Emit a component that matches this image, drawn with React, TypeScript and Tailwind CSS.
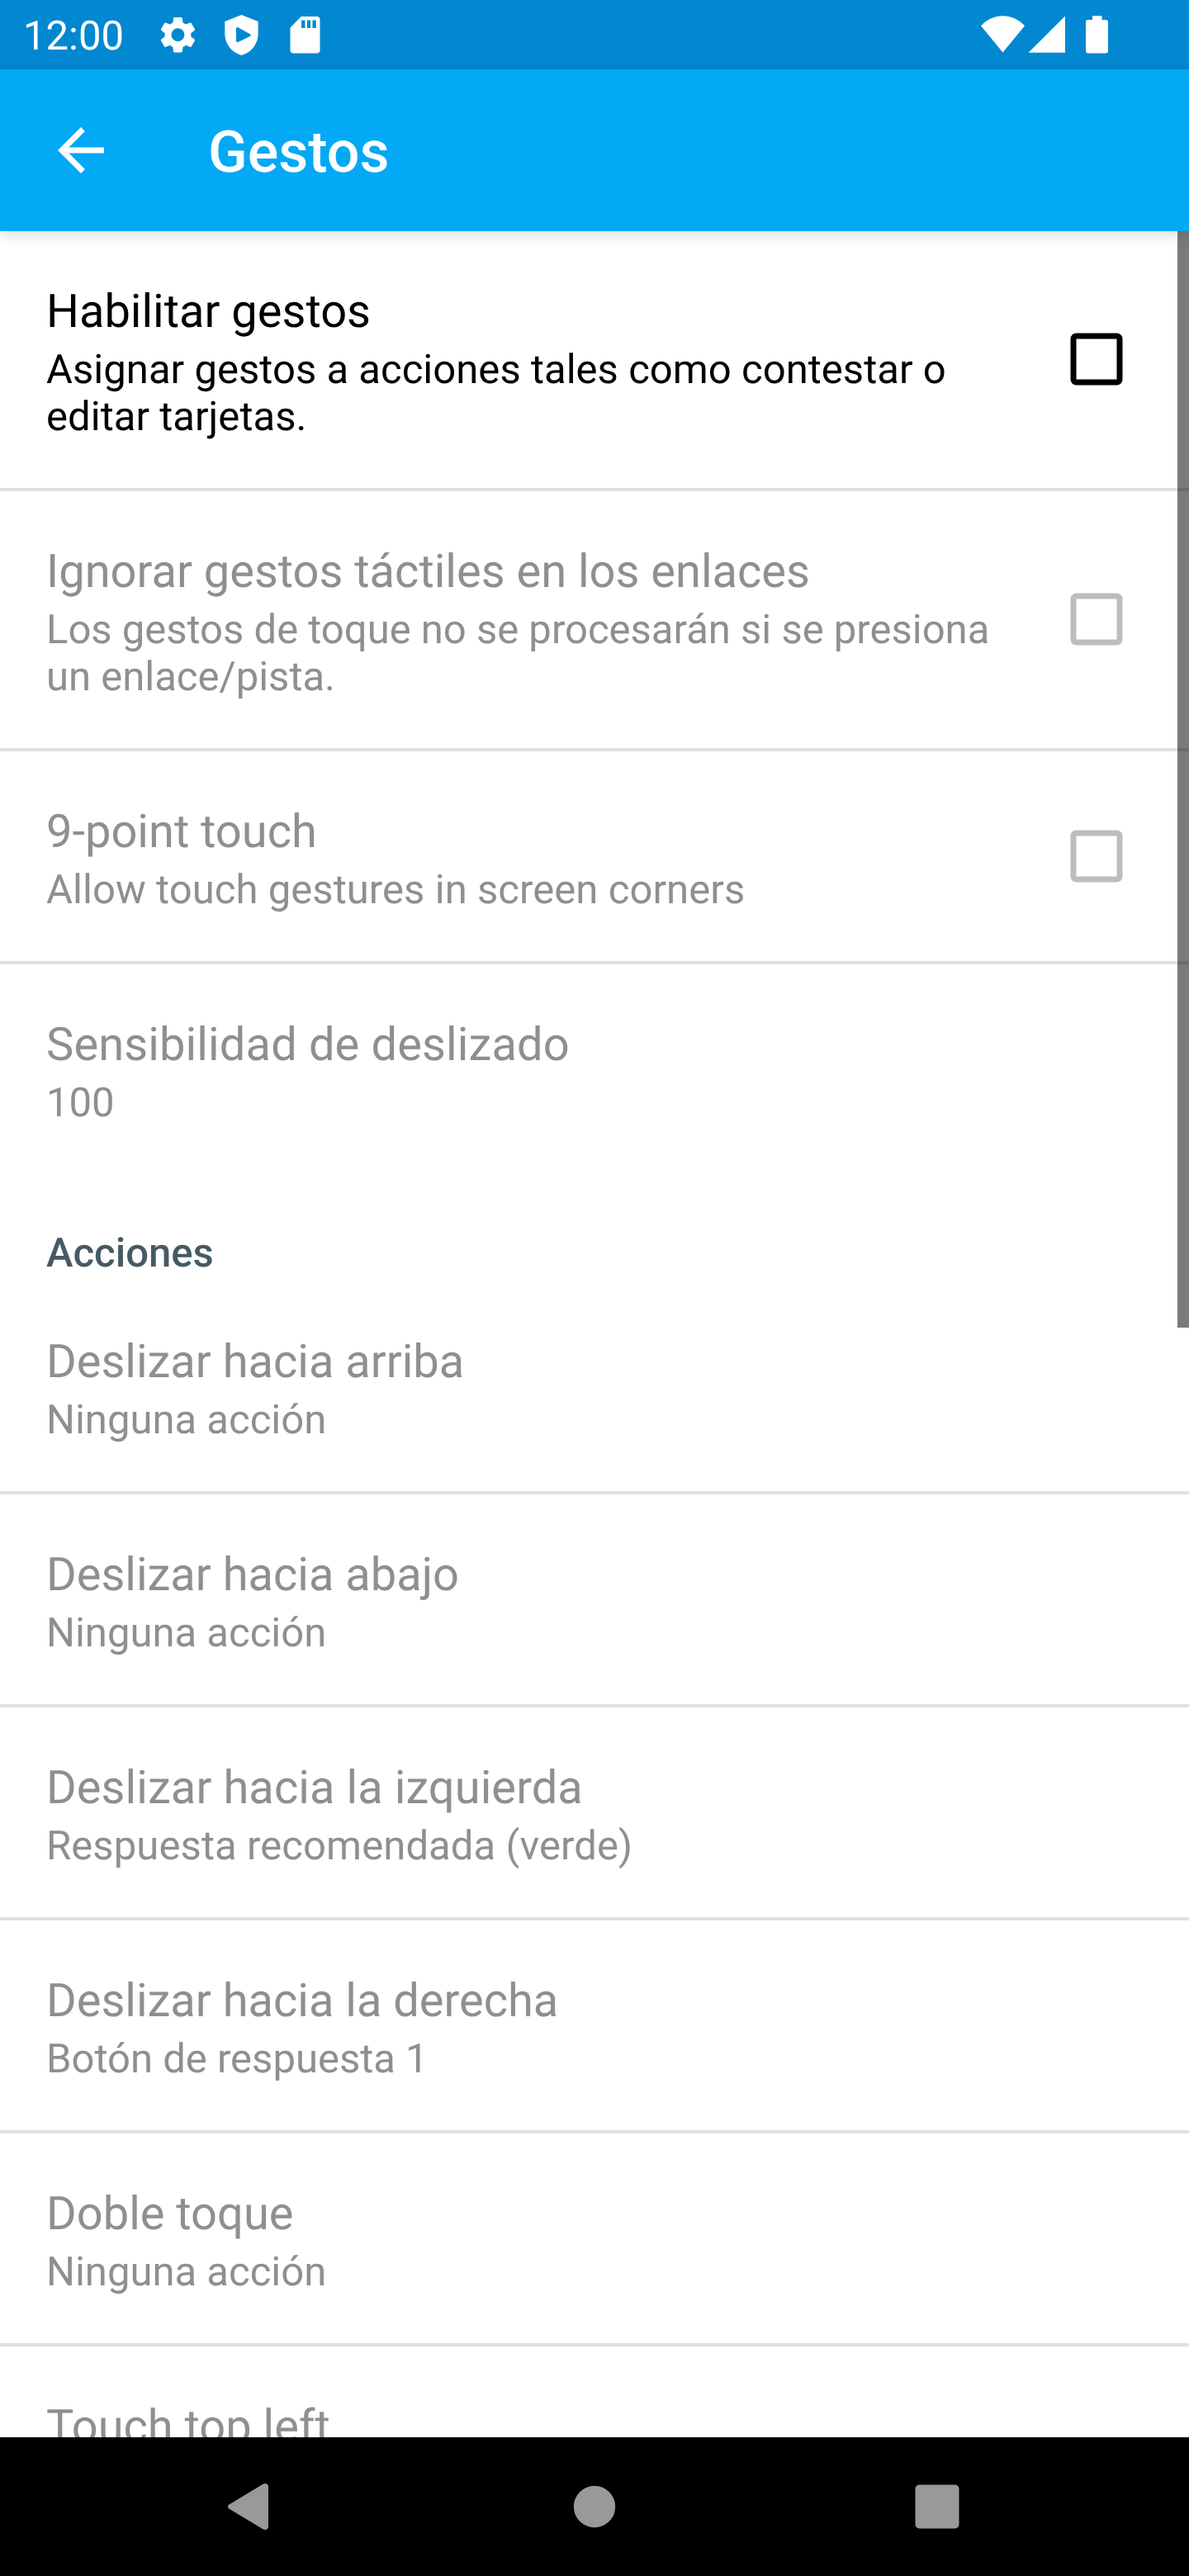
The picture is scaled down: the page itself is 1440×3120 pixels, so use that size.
function Checkbox({ enabled, raised }: { enabled: boolean; raised: boolean }) {
  return (
    <svg
      className={`mr-20 h-16 w-16 shrink-0 ${raised ? "-mt-px" : ""} ${enabled ? "text-black" : "text-[#bdbdbd]"}`}
      viewBox="0 0 64 64"
      fill="none"
      role="checkbox"
      aria-checked="false"
    >
      <rect x="4" y="4" width="56" height="56" rx="3.5" stroke="currentColor" strokeWidth="7" />
    </svg>
  );
}

type Item = {
  title: string;
  summary: string[];
  titleClass?: string;
  summaryClass?: string;
  enabled?: boolean;
  checkbox?: boolean;
  divider?: boolean;
};

const general: Item[] = [
  {
    title: "Habilitar gestos",
    summary: ["Asignar gestos a acciones tales como contestar o", "editar tarjetas."],
    summaryClass: "tracking-[0.035px]",
    enabled: true,
    checkbox: true,
    divider: true,
  },
  {
    title: "Ignorar gestos táctiles en los enlaces",
    summary: ["Los gestos de toque no se procesarán si se presiona", "un enlace/pista."],
    checkbox: true,
    divider: true,
  },
  {
    title: "9-point touch",
    summary: ["Allow touch gestures in screen corners"],
    summaryClass: "tracking-[0.06px]",
    checkbox: true,
    divider: true,
  },
  { title: "Sensibilidad de deslizado", summary: ["100"], titleClass: "tracking-[0.13px]" },
];

const actions: Item[] = [
  { title: "Deslizar hacia arriba", summary: ["Ninguna acción"], divider: true },
  { title: "Deslizar hacia abajo", summary: ["Ninguna acción"], divider: true },
  {
    title: "Deslizar hacia la izquierda",
    summary: ["Respuesta recomendada (verde)"],
    titleClass: "tracking-[0.08px]",
    summaryClass: "tracking-[0.09px]",
    divider: true,
  },
  { title: "Deslizar hacia la derecha", summary: ["Botón de respuesta 1"], divider: true },
  { title: "Doble toque", summary: ["Ninguna acción"], divider: true },
  { title: "Touch top left", summary: [] },
];

function Preference({
  title,
  summary,
  titleClass = "",
  summaryClass = "",
  enabled = false,
  checkbox,
  divider,
}: Item) {
  return (
    <div
      className={`flex shrink-0 items-center border-b-4 pl-14 ${divider ? "border-[#e0e0e0]" : "border-transparent"}`}
    >
      <div className={`flex-1 whitespace-nowrap pt-16 pb-[58px] ${enabled ? "text-black" : "text-[#8f8f8f]"}`}>
        <div className={`text-[56px] leading-[66px] ${titleClass}`}>{title}</div>
        <div className={`mt-[9px] text-[49px] leading-[57px] ${summaryClass}`}>
          {summary.map((line) => (
            <div key={line}>{line}</div>
          ))}
        </div>
      </div>
      {checkbox && <Checkbox enabled={enabled} raised={summary.length > 1} />}
    </div>
  );
}

function StatusBar() {
  return (
    <header className="flex h-[84px] shrink-0 items-center bg-[#0288d1] text-white">
      <span className="ml-7 w-[153px] pt-1 text-[49px] leading-[80px]">12:00</span>
      <svg className="h-[84px] w-[220px]" viewBox="181 0 220 84" fill="currentColor">
        <path
          transform="translate(188.9 15.7) scale(2.21)"
          d="M19.14 12.94c.04-.3.06-.61.06-.94 0-.32-.02-.64-.07-.94l2.03-1.58c.18-.14.23-.41.12-.61l-1.92-3.32c-.12-.22-.37-.29-.59-.22l-2.39.96c-.5-.38-1.03-.7-1.62-.94l-.36-2.54c-.04-.24-.24-.41-.48-.41h-3.84c-.24 0-.43.17-.47.41l-.36 2.54c-.59.24-1.13.57-1.62.94l-2.39-.96c-.22-.08-.47 0-.59.22L2.74 8.87c-.12.21-.08.47.12.61l2.03 1.58c-.05.3-.09.63-.09.94s.02.64.07.94l-2.03 1.58c-.18.14-.23.41-.12.61l1.92 3.32c.12.22.37.29.59.22l2.39-.96c.5.38 1.03.7 1.62.94l.36 2.54c.05.24.24.41.48.41h3.84c.24 0 .44-.17.47-.41l.36-2.54c.59-.24 1.13-.56 1.62-.94l2.39.96c.22.08.47 0 .59-.22l1.92-3.32c.12-.22.07-.47-.12-.61l-2.01-1.58zM12 15.6A3.6 3.6 0 1 1 12 8.4a3.6 3.6 0 0 1 0 7.2z"
        />
        <path
          fillRule="evenodd"
          d="M292.5 18 312.6 26v15c0 12-8 22.500-20.100 26-12-3.500-20.200-14-20.200-26V26ZM286 35v14.500c0 1.600 1 2 2.300 1.500l14.500-7c1.400-.7 1.400-2 0-2.700l-14.500-8c-1.300-.6-2.300 0-2.300 1.700Z"
        />
        <path
          fillRule="evenodd"
          d="M364.800 20H383.500a4 4 0 0 1 4 4V60.500a4 4 0 0 1-4 4H355.500a4 4 0 0 1-4-4V33.500ZM365 24.500V34h4.500V24.500ZM372 24.500V34h4V24.500ZM378.500 24.500V34h4.300V24.500Z"
        />
      </svg>
      <svg className="ml-auto mr-[90px] h-[84px] w-[170px]" viewBox="1180 0 170 84" fill="currentColor">
        <path d="M1188 31.300C1202.500 15.100 1226.500 15.100 1241 31.300L1214.500 63.500Z" />
        <path d="M1290 19.500V63.700H1245.500Z" />
        <path d="M1323 19.300h11.500V24h4.500a3 3 0 0 1 3 3v34.500a3 3 0 0 1-3 3h-21a3 3 0 0 1-3-3V27a3 3 0 0 1 3-3h5Z" />
      </svg>
    </header>
  );
}

function AppBar() {
  return (
    <div className="z-10 flex h-[196px] shrink-0 items-center bg-[#03a9f4] text-white shadow-[0_4px_16px_rgba(0,0,0,0.16)]">
      <svg className="ml-14 h-[84px] w-[84px]" viewBox="0 0 24 24" fill="currentColor">
        <path d="M20 11H7.830l5.590-5.590L12 4l-8 8 8 8 1.410-1.410L7.830 13H20v-2z" />
      </svg>
      <h1 className="ml-28 pt-1.5 text-[70px] leading-[82px] font-medium">Gestos</h1>
    </div>
  );
}

function NavigationBar() {
  return (
    <nav className="flex h-[168px] shrink-0 items-center justify-center bg-black text-[#999999]">
      <svg className="h-[168px] w-[960px]" viewBox="240 2952 960 168" fill="currentColor">
        <path d="M277.800 3033.200 318.500 3008.700c3-1.700 6.500-.2 6.500 3.300v48c0 3.500-3.500 5-6.500 3.300L277.800 3038.800c-2.400-1.500-2.400-4.100 0-5.600Z" />
        <circle cx="720" cy="3036" r="25.200" />
        <rect x="1108.500" y="3009.500" width="53" height="53" rx="5" />
      </svg>
    </nav>
  );
}

export default function App() {
  return (
    <div className="flex h-[3120px] w-[1440px] flex-col overflow-hidden bg-white font-['Roboto',sans-serif] [text-rendering:geometricPrecision]">
      <StatusBar />
      <AppBar />
      <main className="relative flex min-h-0 flex-1 flex-col overflow-hidden">
        {general.map((item) => (
          <Preference key={item.title} {...item} />
        ))}
        <h2 className="h-[126px] shrink-0 pt-[63px] pl-14 text-[49px] leading-[57px] font-medium text-[#455a64]">
          Acciones
        </h2>
        {actions.map((item) => (
          <Preference key={item.title} {...item} />
        ))}
        <div className="absolute top-0 right-0 h-[1328px] w-3.5 bg-black/52" />
      </main>
      <NavigationBar />
    </div>
  );
}
